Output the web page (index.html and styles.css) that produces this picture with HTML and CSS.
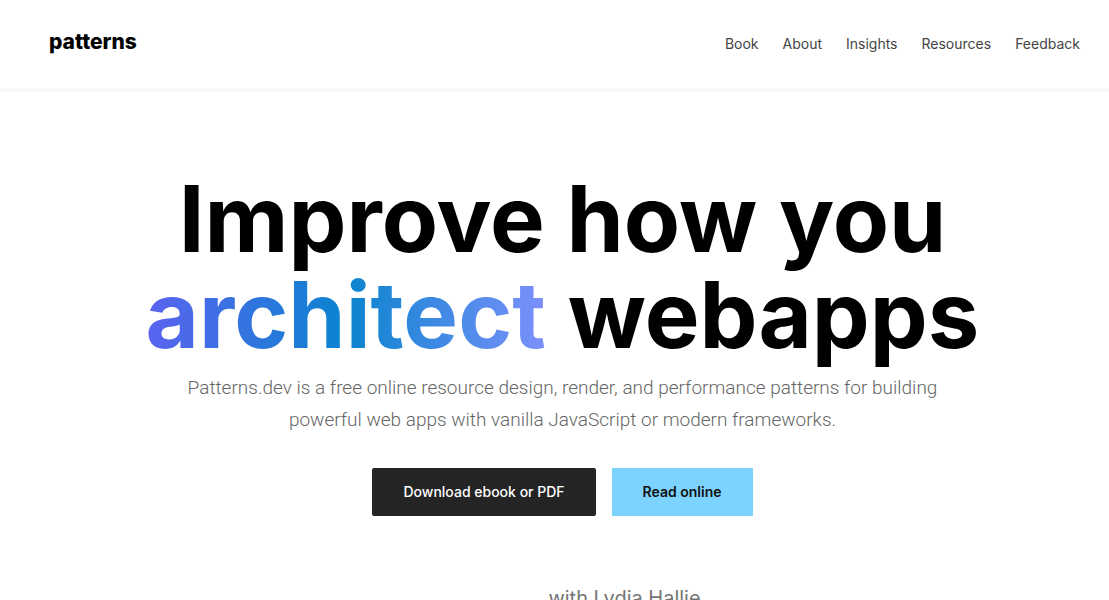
FILE: index.html
```html
<!DOCTYPE html>
<html lang="en">
<head>
<meta charset="utf-8">
<meta name="viewport" content="width=device-width, initial-scale=1">
<title>Patterns.dev</title>
<link rel="stylesheet" href="styles.css">
</head>
<body>
<header class="header">
  <a class="logo" href="#">patterns</a>
  <nav class="nav">
    <a href="#">Book</a>
    <a href="#">About</a>
    <a href="#">Insights</a>
    <a href="#">Resources</a>
    <a href="#">Feedback</a>
  </nav>
</header>
<main class="hero">
  <h1 class="title">Improve how you<br><span class="accent">architect</span> webapps</h1>
  <p class="lead">Patterns.dev is a free online resource design, render, and performance patterns for building powerful web apps with vanilla JavaScript or modern frameworks.</p>
  <div class="actions">
    <a class="button button-dark" href="#">Download ebook or PDF</a>
    <a class="button button-light" href="#">Read online</a>
  </div>
  <p class="byline">with Lydia Hallie</p>
</main>
</body>
</html>
```
FILE: styles.css
```css
* {
  box-sizing: border-box;
}

body {
  margin: 0;
  overflow: hidden;
  background: #fff;
  color: #000;
  font-family: Inter, "Liberation Sans", sans-serif;
}

a {
  color: inherit;
  text-decoration: none;
}

.header {
  display: flex;
  align-items: center;
  justify-content: space-between;
  padding: 28px 29px 28px 49px;
  border-bottom: 4px solid #f7f7f7;
  line-height: 32px;
}

.logo {
  padding-bottom: 4px;
  font-size: 21px;
  font-weight: 800;
  line-height: 28px;
}

.nav {
  display: flex;
  gap: 24px;
  color: #444;
  font-size: 14px;
  font-weight: 400;
}

.hero {
  display: flex;
  flex-direction: column;
  align-items: center;
  padding: 79px 16px 0 32px;
  text-align: center;
}

.title {
  margin: 0;
  font-size: 92px;
  font-weight: 700;
  line-height: 96px;
}

.accent {
  background: linear-gradient(90deg, #5b63f0, #0a84cf 50%, #7c90fc);
  -webkit-background-clip: text;
  background-clip: text;
  color: transparent;
}

.lead {
  max-width: 780px;
  margin: 9px 0 0;
  color: #666;
  font-family: Roboto, Inter, sans-serif;
  font-size: 19px;
  font-weight: 300;
  line-height: 32px;
}

.actions {
  display: flex;
  gap: 16px;
  margin-top: 32px;
}

.button {
  padding: 0 31px;
  border-radius: 2px;
  font-size: 14px;
  font-weight: 500;
  line-height: 48px;
}

.button-dark {
  background: #242424;
  color: #fff;
}

.button-light {
  border-radius: 0;
  background: #7dd3ff;
  color: #111;
  font-weight: 600;
}

.byline {
  margin: 66px 0 0 124px;
  color: #757575;
  font-size: 20px;
  line-height: 32px;
}
```
